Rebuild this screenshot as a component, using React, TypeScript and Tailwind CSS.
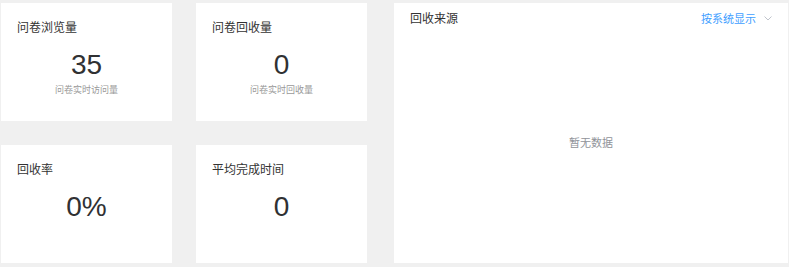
import React from "react";

const font = { fontFamily: '"Noto Sans CJK SC", "Noto Sans", sans-serif' };

function StatCard({ title, value, sub }: { title: string; value: string; sub?: string }) {
  return (
    <div className="bg-white h-[118px] flex flex-col">
      <div className="px-[16px] pt-[16px] text-[12px] leading-[16px] text-[#333333]">{title}</div>
      <div className="mt-[14px] text-center text-[28px] leading-[32px] text-[#303133]" style={{ fontFamily: '"Liberation Sans", Arial, sans-serif' }}>
        {value}
      </div>
      {sub ? (
        <div className="mt-[3px] text-center text-[9px] leading-[12px] text-[#999999]">{sub}</div>
      ) : null}
    </div>
  );
}

export default function App() {
  return (
    <div className="w-[789px] h-[267px] bg-[#f0f0f0] pt-[3px] pl-[1px] flex gap-[27px]" style={font}>
      <div className="grid grid-cols-[171px_171px] grid-rows-[118px_118px] gap-x-[24px] gap-y-[24px]">
        <StatCard title="问卷浏览量" value="35" sub="问卷实时访问量" />
        <StatCard title="问卷回收量" value="0" sub="问卷实时回收量" />
        <StatCard title="回收率" value="0%" />
        <StatCard title="平均完成时间" value="0" />
      </div>
      <div className="bg-white w-[394px] h-[260px] flex flex-col">
        <div className="h-[30px] px-[16px] flex items-center justify-between">
          <span className="text-[12px] leading-[16px] text-[#333333]">回收来源</span>
          <span className="flex items-center text-[11px] leading-[16px] text-[#409eff]">
            按系统显示
            <svg width="8" height="5" viewBox="0 0 8 5" className="ml-[8px]" fill="none">
              <path d="M0.5 0.5 L4 4 L7.5 0.5" stroke="#c0c4cc" strokeWidth="1" />
            </svg>
          </span>
        </div>
        <div className="pt-[101px] text-center text-[11px] leading-[16px] text-[#909399]">暂无数据</div>
      </div>
    </div>
  );
}
